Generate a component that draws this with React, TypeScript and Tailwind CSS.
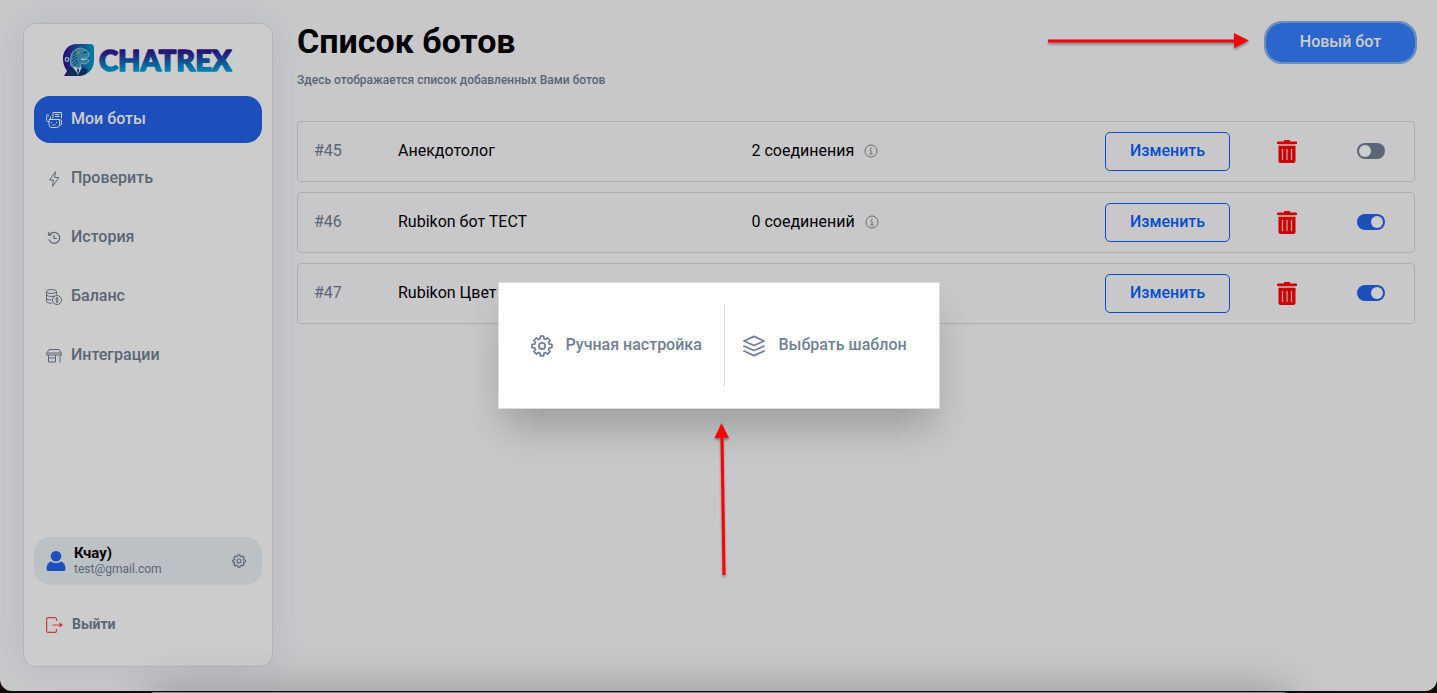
import { useState, type ReactNode } from 'react';

type IconProps = { className?: string };

function GearIcon({ className }: IconProps) {
  return (
    <svg viewBox="-12 -12 24 24" fill="none" stroke="currentColor" strokeWidth="1.900" strokeLinejoin="round" className={className}>
      <path d="M-2-8-1.800-10.800H1.800L2-8 4.100-7.100 6-8.900 8.900-6 7.100-4.100 8-2 10.800-1.800V1.800L8 2 7.100 4.100 8.900 6 6 8.900 4.100 7.100 2 8 1.800 10.800H-1.800L-2 8-4.100 7.100-6 8.900-8.900 6-7.100 4.100-8 2-10.800 1.800V-1.800L-8-2-7.100-4.100-8.900-6-6-8.900-4.100-7.100Z" />
      <circle r="3.400" />
    </svg>
  );
}

function LayersIcon({ className }: IconProps) {
  return (
    <svg viewBox="0 0 24 24" fill="none" stroke="currentColor" strokeWidth="1.8" strokeLinejoin="round" strokeLinecap="round" className={className}>
      <path d="M12 1.500 23 6.500 12 11.500 1 6.500Z" />
      <path d="m1 12 11 5 11-5" />
      <path d="m1 17.500 11 5 11-5" />
    </svg>
  );
}

function BotIcon() {
  return (
    <svg viewBox="0 0 16 16" fill="none" stroke="currentColor" strokeWidth="1" className="size-4">
      <path d="M7 6.500V.5h8.500v6M9 2.500h4.500M9 4.500h4.500" />
      <path d="M3 7.500h10.500v5a3 3 0 0 1-3 3H6a3 3 0 0 1-3-3v-5ZM3 9.500H1.500A1 1 0 0 1 .5 8.500V5M13.500 8h1a1 1 0 0 1 1 1v3a1 1 0 0 1-1 1h-1M4.500 7.500v-3" />
      <circle cx="1.500" cy="3.500" r="1" />
      <path d="M5.500 10v1M10.500 10v1M6.500 12.500c.8.8 2.200.8 3 0" />
    </svg>
  );
}

function BoltIcon() {
  return (
    <svg viewBox="0 0 16 16" fill="none" stroke="currentColor" strokeWidth="1" strokeLinejoin="round" className="size-4">
      <path d="M9.500.6 3.500 9h4l-1 6.400L12.800 6.500H8.700L9.500.6Z" />
    </svg>
  );
}

function HistoryIcon() {
  return (
    <svg viewBox="0 0 16 16" fill="none" stroke="currentColor" strokeWidth="1.200" strokeLinecap="round" className="size-4">
      <path d="M3.500 4.800A5.500 5.500 0 1 1 3 9.800" />
      <path d="M2.500 2.500v2.700h2.700M8 5.500v3h2.500" />
    </svg>
  );
}

function CoinsIcon() {
  return (
    <svg viewBox="0 0 16 16" fill="none" stroke="currentColor" strokeWidth="1" className="size-4">
      <ellipse cx="5.500" cy="2.500" rx="5" ry="2" />
      <path d="M.5 2.500v9.800c0 1.100 2.200 2 5 2h.8M10.500 2.500v3M.5 5.500c0 1.100 2.200 2 5 2 1 0 2-.1 2.800-.4M.5 9c0 1.100 2.200 2 5 2" />
      <circle cx="11" cy="11" r="4.500" />
      <path d="M12.300 9.500c-.5-.8-2.500-.7-2.500.4 0 1.300 2.600.8 2.600 2.100 0 1.100-2.200 1.200-2.700.3M11 8v6" />
    </svg>
  );
}

function StoreIcon() {
  return (
    <svg viewBox="0 0 16 16" fill="none" stroke="currentColor" strokeWidth="1" className="size-4">
      <path d="M3 1.500h10l2.500 4v1.500H.5V5.500l2.500-4ZM.8 5h14.400" />
      <path d="M2.500 7v7h7V7M2.500 10h7M14 7v7.500" />
    </svg>
  );
}

function UserIcon() {
  return (
    <svg viewBox="0 0 20 20" fill="currentColor" className="h-5 w-5 text-[#2563eb]">
      <circle cx="10" cy="5.300" r="5.300" />
      <path d="M5 10.500c3 2.100 7 2.100 10 0 3 1 4.500 4 4.500 7.500 0 1.300-.7 2-2 2h-15c-1.300 0-2-.7-2-2C.5 14.500 2 11.500 5 10.500Z" />
    </svg>
  );
}

function ExitIcon() {
  return (
    <svg viewBox="0 0 17 16" fill="none" stroke="currentColor" strokeWidth="1.200" className="h-4 w-[17px] text-[#ff4858]">
      <path d="M10.500 4V2A1.500 1.500 0 0 0 9 .6H2A1.400 1.400 0 0 0 .6 2v12A1.400 1.400 0 0 0 2 15.400h7a1.500 1.500 0 0 0 1.500-1.400v-2M6.500 8H15" />
      <path d="m13.500 5.300 3.500 2.700-3.500 2.700Z" fill="currentColor" stroke="none" />
    </svg>
  );
}

function InfoIcon() {
  return (
    <svg viewBox="0 0 14 14" fill="none" stroke="currentColor" strokeWidth="1" className="size-[14px] text-[#888]">
      <circle cx="7" cy="7" r="6" />
      <path d="M5.500 6H7v4M5.300 10h3.400M7 3.500v1.300" />
    </svg>
  );
}

function TrashIcon() {
  return (
    <svg viewBox="0 0 20 23" className="h-[23px] w-5">
      <path d="M7 0h6v1.500h6a1 1 0 0 1 1 1V4H0V2.500a1 1 0 0 1 1-1h6Z" fill="#f00" />
      <path d="M1.500 4h17v2h-17Z" fill="#ffb3b3" />
      <path d="M1.500 6h17v15a2 2 0 0 1-2 2h-13a2 2 0 0 1-2-2Z" fill="#f00" />
      <path d="M5.500 9v11M10 9v11M14.500 9v11" stroke="#ffc4c4" strokeWidth="1.300" />
    </svg>
  );
}

function Logo() {
  return (
    <svg viewBox="0 0 172 34" role="img" aria-label="CHATREX" className="h-[34px] w-[172px]">
      <defs>
        <linearGradient id="word" gradientUnits="userSpaceOnUse" x1="0" y1="6" x2="0" y2="29">
          <stop offset="0.1" stopColor="#2e1a92" />
          <stop offset="0.9" stopColor="#009fd4" />
        </linearGradient>
        <linearGradient id="bubble" x1="0" y1="0" x2="1" y2="0">
          <stop offset="0.1" stopColor="#2e1a92" />
          <stop offset="0.9" stopColor="#0095c4" />
        </linearGradient>
      </defs>
      <path d="M15 1h13a4 4 0 0 1 4 4v12c0 10-7 16-16 16H2l3-5C-3 17 1 1 15 1Z" fill="url(#bubble)" />
      <path d="M9 23c-1-4-1-9 1-13 2-3 5-5 9-5l5 2 3 3v3l-3 2-5 .5 1 1 6-.5 1 2-3 3-5-.5-1 5-3 3Z" fill="#3d9fc8" stroke="#b9e9f8" strokeWidth=".7" />
      <path d="m11 11 3-2m-4 6 4-3m-4 6 5-4m-4 7 4-4m-3 6 4-4m5-9 4-1" stroke="#123a78" strokeWidth=".9" />
      <path d="m19 17 5-1" stroke="#e6f7ff" strokeWidth=".9" />
      <circle cx="16.500" cy="9.500" r="1.200" fill="#ff9d1c" />
      <path d="m9 23 7 8 5-7 5 3-2 4-6 2H7l-1-5Z" fill="#15366f" />
      <path d="m11 23 5 9 4-8-4 1Z" fill="#e6f7ff" />
      <path d="m16 25 1 2-1 5-1-5Z" fill="#15366f" />
      <circle cx="5" cy="16.500" r="1.800" fill="none" stroke="#d9ecff" strokeWidth="1.200" />
      <text x="37" y="28" fontSize="29" fontWeight="900" fontFamily="Lato, sans-serif" fill="url(#word)" stroke="url(#word)" strokeWidth="1.500" strokeLinejoin="round">
        CHATREX
      </text>
    </svg>
  );
}

const navItems: { label: string; icon: ReactNode }[] = [
  { label: 'Мои боты', icon: <BotIcon /> },
  { label: 'Проверить', icon: <BoltIcon /> },
  { label: 'История', icon: <HistoryIcon /> },
  { label: 'Баланс', icon: <CoinsIcon /> },
  { label: 'Интеграции', icon: <StoreIcon /> },
];

const initialBots = [
  { id: 45, name: 'Анекдотолог', connections: '2 соединения', enabled: false },
  { id: 46, name: 'Rubikon бот ТЕСТ', connections: '0 соединений', enabled: true },
  { id: 47, name: 'Rubikon Цвет', connections: '0 соединений', enabled: true },
];

function Sidebar() {
  return (
    <aside className="flex w-[250px] shrink-0 flex-col rounded-xl border border-[#dbe1ee] bg-white px-2.5 shadow-[0_0_40px_rgba(80,90,160,0.12)]">
      <a href="#home" className="mt-[19px] flex justify-center">
        <Logo />
      </a>
      <nav className="mt-[19px] flex flex-col gap-3">
        {navItems.map((item, i) => (
          <a
            key={item.label}
            href={`#nav-${i}`}
            className={`flex h-[47px] items-center gap-[9px] rounded-2xl px-3 text-base font-medium ${
              i === 0 ? 'bg-[#2563eb] text-white' : 'text-[#718096]'
            }`}
          >
            {item.icon}
            <span className="pb-0.5">{item.label}</span>
          </a>
        ))}
      </nav>

      <div className="mt-auto flex h-12 items-center gap-2 rounded-2xl bg-[#ebf2f7] px-3">
        <UserIcon />
        <div className="flex-1">
          <div className="text-[15px]/4 font-bold text-black">Кчау)</div>
          <div className="text-xs/4 text-[#718096]">test@gmail.com</div>
        </div>
        <button aria-label="Настройки профиля" className="mr-1 text-[#718096]">
          <GearIcon className="size-[14px]" />
        </button>
      </div>
      <button className="mt-5 mb-[21px] flex h-10 items-center gap-[9px] px-3 text-sm font-bold text-[#718096]">
        <ExitIcon />
        <span className="pb-0.5">Выйти</span>
      </button>
    </aside>
  );
}

export default function App() {
  const [bots, setBots] = useState(initialBots);

  const toggle = (id: number) =>
    setBots(bots.map((bot) => (bot.id === id ? { ...bot, enabled: !bot.enabled } : bot)));

  return (
    <div className="relative h-screen overflow-hidden bg-[#150a04] pb-0.5 font-[Roboto,sans-serif]">
      <div className="relative flex h-full overflow-hidden rounded-b-xl bg-[#fafbfd] pt-[23px] pr-[22px] pb-6 pl-[23px]">
        <Sidebar />

        <main className="ml-6 min-w-0 flex-1">
          <header className="flex items-start justify-between">
            <div>
              <h1 className="-mt-0.5 text-[34px]/10 font-bold text-black">Список ботов</h1>
              <p className="mt-[11px] text-xs/4 font-medium text-[#718096]">Здесь отображается список добавленных Вами ботов</p>
            </div>
            <button className="h-[39px] w-[149px] rounded-2xl bg-[#3680ff] pb-0.5 text-base font-medium text-white outline-2 outline-[#85b1eb]">
              Новый бот
            </button>
          </header>

          <ul className="mt-[33px] flex flex-col gap-2.5">
            {bots.map((bot) => (
              <li
                key={bot.id}
                className="grid h-[61px] grid-cols-[84px_1fr_1fr_125px_114px_54px] items-center rounded-sm border border-[#d9dadc] px-4"
              >
                <span className="pb-0.5 text-[#718096]">#{bot.id}</span>
                <span className="pb-0.5 text-black">{bot.name}</span>
                <span className="flex items-center gap-2.5 pb-0.5 text-black">
                  {bot.connections}
                  <InfoIcon />
                </span>
                <button className="h-[39px] rounded-[5px] border border-[#0062ff] pb-0.5 font-medium text-[#0062ff]">Изменить</button>
                <button aria-label={`Удалить бота ${bot.id}`} className="justify-self-center">
                  <TrashIcon />
                </button>
                <label className="justify-self-center pb-0.5">
                  <input
                    type="checkbox"
                    aria-label={`Включить бота ${bot.id}`}
                    checked={bot.enabled}
                    onChange={() => toggle(bot.id)}
                    className="peer sr-only"
                  />
                  <span className="flex h-4 w-7 items-center rounded-full bg-[#718096] px-0.5 peer-checked:justify-end peer-checked:bg-[#2563eb]">
                    <span className="size-3 rounded-full bg-white" />
                  </span>
                </label>
              </li>
            ))}
          </ul>
        </main>

        <div className="absolute inset-0 flex items-center justify-center bg-black/20">
          <div
            role="dialog"
            aria-label="Новый бот"
            className="flex w-[442px] border border-[#dcdcdc] bg-white py-[22px] pl-8 font-medium text-[#718096] shadow-[0_24px_38px_-6px_rgba(0,0,0,0.22)]"
          >
            <button className="flex h-[81px] w-[193px] items-center gap-[13px]">
              <GearIcon className="size-[22px]" />
              <span className="pb-0.5">Ручная настройка</span>
            </button>
            <button className="flex flex-1 items-center gap-3.5 border-l border-[#d5d7da] pl-[18px]">
              <LayersIcon className="size-[22px]" />
              <span className="pb-0.5">Выбрать шаблон</span>
            </button>
          </div>
        </div>
      </div>

      {/* Док под окном */}
      <div className="absolute right-[150px] -bottom-[79px] left-[150px] h-20 rounded-sm bg-[#8c8886] shadow-[0_0_45px_rgba(0,0,0,0.28)]" />

      {/* Стрелки-подсказки */}
      <svg viewBox="0 0 204 20" className="pointer-events-none absolute top-[31px] right-[186px] h-5 w-[204px] drop-shadow-[0_2px_1px_rgba(0,0,0,0.35)]">
        <path d="M1 8.500h186V2l15 7.500-15 7.500v-5.500H1Z" fill="#f00" />
      </svg>
      <svg viewBox="0 0 20 156" className="pointer-events-none absolute top-[422px] left-1/2 -ml-2 h-[156px] w-5 drop-shadow-[0_2px_1px_rgba(0,0,0,0.35)]">
        <path d="M10.500 1 18 16h-5.500l2 137h-3L9.500 16H3.500Z" fill="#f00" />
      </svg>
    </div>
  );
}
